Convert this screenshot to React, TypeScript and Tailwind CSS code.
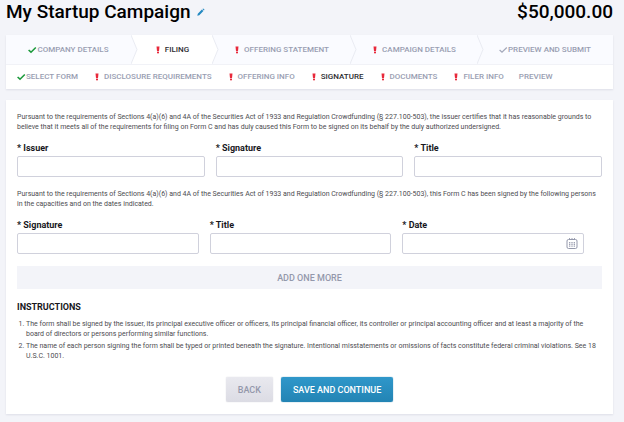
import { clsx } from 'clsx';

type Status = 'done' | 'error' | 'pending' | 'none';

const steps: { label: string; status: Status; width: string; active?: boolean }[] = [
    { label: 'COMPANY DETAILS', status: 'done', width: 'flex-[125]' },
    { label: 'FILING', status: 'error', width: 'flex-[81]', active: true },
    { label: 'OFFERING STATEMENT', status: 'error', width: 'flex-[138]' },
    { label: 'CAMPAIGN DETAILS', status: 'error', width: 'flex-[127]' },
    { label: 'PREVIEW AND SUBMIT', status: 'pending', width: 'flex-[136]' },
];

const sections: { label: string; status: Status; active?: boolean }[] = [
    { label: 'SELECT FORM', status: 'done' },
    { label: 'DISCLOSURE REQUIREMENTS', status: 'error' },
    { label: 'OFFERING INFO', status: 'error' },
    { label: 'SIGNATURE', status: 'error', active: true },
    { label: 'DOCUMENTS', status: 'error' },
    { label: 'FILER INFO', status: 'error' },
    { label: 'PREVIEW', status: 'none' },
];

function StatusIcon({ status }: { status: Status }) {
    if (status === 'none') return null;
    if (status === 'error') {
        return (
            <svg className="w-[11px] h-2 shrink-0" viewBox="0 0 11 8" aria-hidden="true">
                <path d="M2.5 0.5h3L5 5H3z" fill="#e8293b" />
                <rect x="3" y="5.6" width="2" height="1.7" fill="#e8293b" />
            </svg>
        );
    }
    return (
        <svg className={clsx('w-[9px] h-2 shrink-0', status === 'done' ? 'text-[#1d9a3c]' : 'text-[#a3a8ba]')} viewBox="0 0 9 8" aria-hidden="true">
            <path
                d="M0.6 4L3 6.2L7.8 1.5"
                fill="none"
                stroke="currentColor"
                strokeWidth={status === 'done' ? 1.6 : 1.2}
            />
        </svg>
    );
}

function Field({ id, label }: { id: string; label: string }) {
    return (
        <div className="min-w-0">
            <label htmlFor={id} className="block text-[9px] leading-3 font-bold text-[#17171c]">* {label}</label>
            <div className="relative mt-0.5">
                <input id={id} type="text" className="block w-full h-[21px] border border-[#d0d1dc] rounded-xs bg-white px-2 text-[9px] outline-none focus:border-[#2a8fc4]" />
                {id === 'date' && (
                    <button type="button" aria-label="Pick a date" className="absolute right-[6px] top-[5px]">
                        <svg className="w-3 h-[11px]" viewBox="0 0 12 11" fill="none" stroke="#9498ab">
                            <rect x="1" y="1.5" width="10" height="9" rx="1.5" />
                            <path d="M3.5 0v2M6 0v2M8.5 0v2" strokeWidth="0.9" />
                            <path d="M3.7 4v5M6 4v5M8.3 4v5" strokeDasharray="1.2 0.6" strokeWidth="1.2" />
                        </svg>
                    </button>
                )}
            </div>
        </div>
    );
}

export default function App() {
    return (
        <div className="min-h-screen bg-[#f3f4f9] pl-[6px] pr-[11px] pb-2 font-['Roboto','Liberation_Sans',sans-serif] text-[#4c4c50]">
            <header className="flex items-center justify-between h-[35px] pb-[11px] text-[19px] leading-6 font-medium text-black">
                <h1 className="flex items-center gap-[6px]">
                    My Startup Campaign
                    <button type="button" aria-label="Edit campaign name">
                        <svg className="w-2 h-2" viewBox="0 0 8 8" fill="#2489c1">
                            <path d="M0.3 7.7L0.8 5.7L4.9 1.6L6.4 3.1L2.3 7.2zM5.4 1.1L6.2 0.4L7.6 1.8L6.9 2.6z" />
                        </svg>
                    </button>
                </h1>
                <p>$50,000.00</p>
            </header>

            <div className="bg-white shadow-[0_1px_2px_rgba(40,40,80,0.1)] text-[8px] leading-[10px] font-medium text-[#999eb2]">
                <nav aria-label="Campaign steps" className="border-b border-[#f1f2f7]">
                    <ol className="flex h-[29px]">
                        {steps.map((step, i) => (
                            <li key={step.label} className={clsx('relative min-w-0', step.width, step.active ? 'bg-white text-[#2c2c30]' : 'bg-[#fafbff]')}>
                                <a href="#" className="flex h-full items-center justify-center whitespace-nowrap">
                                    <StatusIcon status={step.status} />
                                    {step.label}
                                </a>
                                {i < steps.length - 1 && (
                                    <svg className="absolute left-full top-0 z-10 w-[7px] h-full" viewBox="0 0 7 30" preserveAspectRatio="none" aria-hidden="true">
                                        <path d="M0 0L6 15L0 30" fill={step.active ? '#ffffff' : '#fafbff'} stroke="#e9ebf2" />
                                    </svg>
                                )}
                            </li>
                        ))}
                    </ol>
                </nav>
                <nav aria-label="Filing sections">
                    <ul className="flex h-6 items-center gap-[15px] px-[11px]">
                        {sections.map((section) => (
                            <li key={section.label} className={clsx('whitespace-nowrap', section.active && 'text-[#2c2c30]')}>
                                <a href="#" className="flex items-center">
                                    <StatusIcon status={section.status} />
                                    {section.label}
                                </a>
                            </li>
                        ))}
                    </ul>
                </nav>
            </div>

            <main className="mt-[11px] bg-white px-[11px] pt-3 pb-3 shadow-[0_1px_2px_rgba(40,40,80,0.1)] text-[7px] leading-[10px]">
                <form onSubmit={(e) => e.preventDefault()}>
                    <p>
                        Pursuant to the requirements of Sections 4(a)(6) and 4A of the Securities Act of 1933 and Regulation Crowdfunding (§ 227.100-503), the issuer certifies that it has reasonable grounds to believe that it meets all of the requirements for filing on Form C and has duly caused this Form to be signed on its behalf by the duly authorized undersigned.
                    </p>
                    <div className="mt-[10px] grid grid-cols-3 gap-[11px]">
                        <Field id="issuer" label="Issuer" />
                        <Field id="issuer-signature" label="Signature" />
                        <Field id="issuer-title" label="Title" />
                    </div>

                    <p className="mt-3">
                        Pursuant to the requirements of Sections 4(a)(6) and 4A of the Securities Act of 1933 and Regulation Crowdfunding (§ 227.100-503), this Form C has been signed by the following persons in the capacities and on the dates indicated.
                    </p>
                    <div className="mt-[10px] grid grid-cols-3 gap-[11px] pr-[18px]">
                        <Field id="signature" label="Signature" />
                        <Field id="title" label="Title" />
                        <Field id="date" label="Date" />
                    </div>
                    <button type="button" className="mt-3 block h-[23px] w-full bg-[#f3f4f9] text-[9px] font-medium text-[#9498ab]">
                        ADD ONE MORE
                    </button>

                    <h2 className="mt-3 text-[9px] leading-3 font-bold text-[#17171c]">INSTRUCTIONS</h2>
                    <ol className="mt-[6px] list-decimal space-y-0.5 pl-[9px]">
                        <li>
                            The form shall be signed by the issuer, its principal executive officer or officers, its principal financial officer, its controller or principal accounting officer and at least a majority of the board of directors or persons performing similar functions.
                        </li>
                        <li>
                            The name of each person signing the form shall be typed or printed beneath the signature. Intentional misstatements or omissions of facts constitute federal criminal violations. See 18 U.S.C. 1001.
                        </li>
                    </ol>

                    <div className="mt-4 flex justify-center gap-2 text-[9px] font-medium">
                        <button type="button" className="h-[25px] rounded-xs bg-linear-to-b from-[#e9e9ef] to-[#dcdce4] px-3 text-[#9498ab] shadow-[0_0_1px_rgba(40,40,80,0.3)]">
                            BACK
                        </button>
                        <button type="submit" className="h-[25px] rounded-xs bg-linear-to-b from-[#2f97ca] to-[#2384b4] px-3 text-white shadow-[0_0_1px_#1b6f9a]">
                            SAVE AND CONTINUE
                        </button>
                    </div>
                </form>
            </main>
        </div>
    );
}
